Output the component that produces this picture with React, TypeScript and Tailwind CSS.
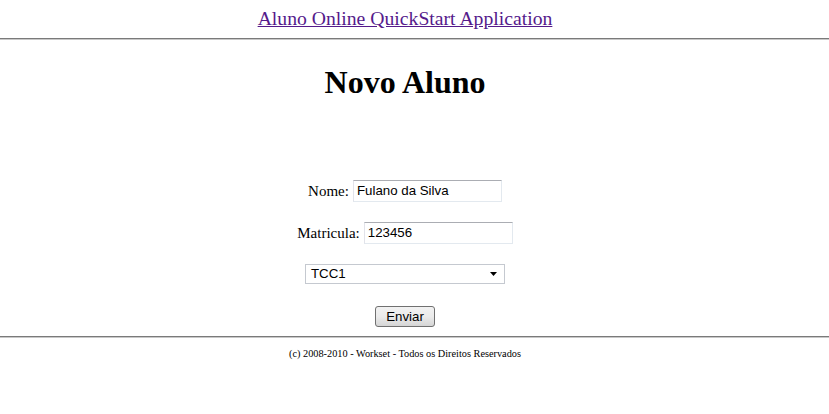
const serif = "font-['Times_New_Roman','Liberation_Serif',serif]";
const sans = "font-['Arial','Liberation_Sans',sans-serif]";

function Field({ label, value }: { label: string; value: string }) {
  return (
    <div className="h-[42px] flex items-start justify-center">
      <label className={`text-[15px] leading-[22px] mr-[4px] ${serif}`}>{label}</label>
      <div
        className={`w-[149px] h-[22px] px-[3px] flex items-center text-[13.3px] text-black bg-white border border-[#e3e9ef] border-t-[#abadb3] border-l-[#e2e3ea] ${sans}`}
      >
        {value}
      </div>
    </div>
  );
}

export default function App() {
  return (
    <div className={`w-[829px] h-[414px] bg-white text-black overflow-hidden ${serif}`}>
      {/* header link */}
      <div className="w-[810px] pt-[7px] h-[38px] text-center">
        <a href="#" className="text-[19.7px] leading-[22px] text-[#551a8b] underline">
          Aluno Online QuickStart Application
        </a>
      </div>
      <div className="h-[2px] border-t border-t-[#7a7a7a] border-b border-b-[#c8c8c8]" />

      <div className="w-[810px] text-center">
        <h1 className="pt-[24px] text-[32px] leading-[37px] font-bold">Novo Aluno</h1>

        <div className="pt-[79px] flex flex-col">
          <Field label="Nome:" value="Fulano da Silva" />
          <Field label="Matricula:" value="123456" />
          <div className="h-[42px] flex items-start justify-center">
            <div
              className={`w-[200px] h-[20px] pl-[5px] pr-[6px] flex items-center justify-between text-[13.3px] bg-white border border-[#c5c9d0] ${sans}`}
            >
              <span>TCC1</span>
              <svg width="8" height="4" viewBox="0 0 8 4">
                <path d="M0 0h7L3.5 4z" fill="#000" />
              </svg>
            </div>
          </div>
          <div className="h-[30px] flex items-start justify-center">
            <div
              className={`w-[60px] h-[21px] flex items-center justify-center text-[13.3px] rounded-[3px] border border-[#707070] bg-gradient-to-b from-[#f2f2f2] via-[#ebebeb] to-[#d5d5d5] ${sans}`}
            >
              Enviar
            </div>
          </div>
        </div>
      </div>

      <div className="h-[2px] border-t border-t-[#7a7a7a] border-b border-b-[#c8c8c8]" />
      <div className="w-[810px] pt-[9px] text-center text-[10.3px] leading-[13px]">
        (c) 2008-2010 - Workset - Todos os Direitos Reservados
      </div>
    </div>
  );
}
